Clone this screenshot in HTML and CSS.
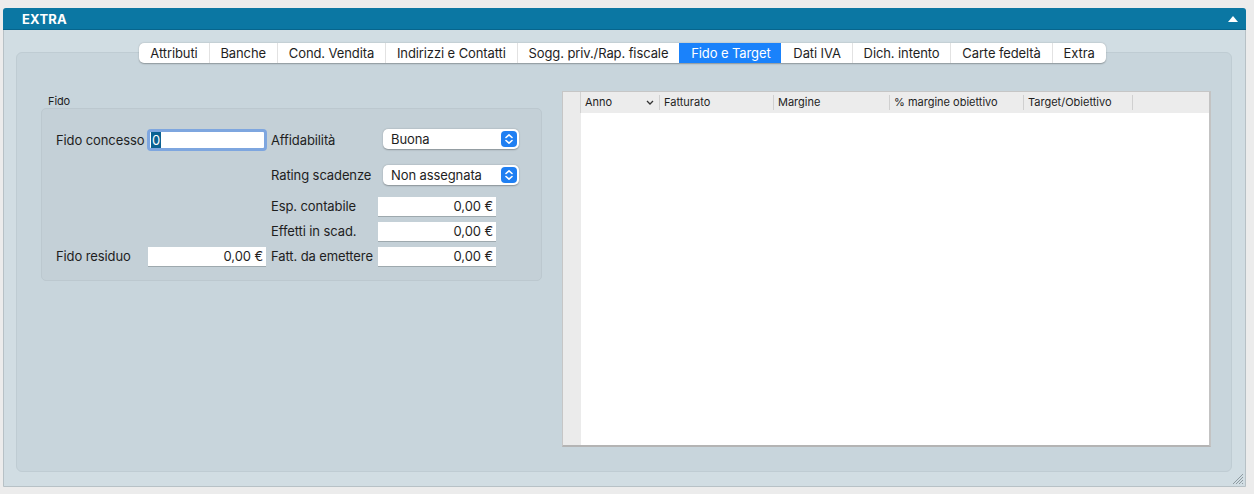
FILE: index.html
```html
<!DOCTYPE html>
<html lang="it">
<head>
  <meta charset="UTF-8" />
  <title>Extra - Fido e Target</title>
  <link rel="stylesheet" href="styles.css">
</head>
<body>
  <section class="panel">
    <header class="panel-head">
      <span class="panel-title">EXTRA</span>
      <svg class="collapse" width="10" height="6" viewBox="0 0 10 6"><path d="M0 6 L5 0 L10 6 Z" fill="#fff"/></svg>
    </header>

    <div class="panel-body">
      <nav class="tabs">
        <a class="tab">Attributi</a>
        <a class="tab">Banche</a>
        <a class="tab">Cond. Vendita</a>
        <a class="tab">Indirizzi e Contatti</a>
        <a class="tab">Sogg. priv./Rap. fiscale</a>
        <a class="tab active">Fido e Target</a>
        <a class="tab">Dati IVA</a>
        <a class="tab">Dich. intento</a>
        <a class="tab">Carte fedeltà</a>
        <a class="tab">Extra</a>
      </nav>

      <div class="tab-box">
        <div class="fido-col">
          <div class="group-label">Fido</div>
          <div class="group">
            <div class="form-grid">
              <label class="lbl r1 c1">Fido concesso</label>
              <div class="input focus r1 c2"><span class="sel">0</span></div>
              <label class="lbl r1 c3">Affidabilità</label>
              <div class="popup r1 c4">Buona <span class="stepper"><svg width="10" height="12" viewBox="0 0 10 12"><path d="M2 4.5 L5 1.8 L8 4.5 M2 7.5 L5 10.2 L8 7.5" stroke="#fff" stroke-width="1.6" fill="none" stroke-linecap="round" stroke-linejoin="round"/></svg></span></div>

              <label class="lbl r2 c3">Rating scadenze</label>
              <div class="popup r2 c4">Non assegnata <span class="stepper"><svg width="10" height="12" viewBox="0 0 10 12"><path d="M2 4.5 L5 1.8 L8 4.5 M2 7.5 L5 10.2 L8 7.5" stroke="#fff" stroke-width="1.6" fill="none" stroke-linecap="round" stroke-linejoin="round"/></svg></span></div>

              <label class="lbl r3 c3">Esp. contabile</label>
              <div class="field r3 c4">0,00 €</div>

              <label class="lbl r4 c3">Effetti in scad.</label>
              <div class="field r4 c4">0,00 €</div>

              <label class="lbl r5 c1">Fido residuo</label>
              <div class="field small r5 c2">0,00 €</div>
              <label class="lbl r5 c3">Fatt. da emettere</label>
              <div class="field r5 c4">0,00 €</div>
            </div>
          </div>
        </div>

        <div class="table">
          <div class="table-head">
            <div class="gutter"></div>
            <div class="th w-anno">Anno <svg class="chev" width="8" height="5" viewBox="0 0 8 5"><path d="M1 1 L4 4 L7 1" stroke="#333" stroke-width="1.3" fill="none"/></svg></div>
            <div class="th w-fatt">Fatturato</div>
            <div class="th w-marg">Margine</div>
            <div class="th w-perc">% margine obiettivo</div>
            <div class="th w-targ">Target/Obiettivo</div>
            <div class="th w-rest"></div>
          </div>
          <div class="table-body">
            <div class="gutter"></div>
            <div class="rows"></div>
          </div>
        </div>
      </div>
    </div>

    <svg class="grip" width="13" height="13" viewBox="0 0 13 13">
      <path d="M12 2 L2 12 M12 5 L5 12 M12 8 L8 12 M12 11 L11 12" stroke="#8f9ba1" stroke-width="1"/>
    </svg>
  </section>
</body>
</html>
```

FILE: styles.css
```css
* {
  box-sizing: border-box;
}

body {
  margin: 0;
  padding: 8px 8px 7px 3px;
  background: #ececec;
  font-family: Inter, "Noto Sans", sans-serif;
  font-size: 13px;
  letter-spacing: -0.1px;
  color: #1e1e1e;
}

.panel {
  position: relative;
  height: 479px;
  border: 1px solid #b7c1c6;
  border-radius: 4px 4px 0 0;
  background: #d1dde3;
  display: flex;
  flex-direction: column;
}

.panel-head {
  height: 22px;
  flex: none;
  background: #0b77a3;
  border-bottom: 1px solid #07658d;
  border-radius: 3px 3px 0 0;
  display: flex;
  align-items: center;
  justify-content: space-between;
  padding: 0 8px 0 19px;
  margin: -1px -1px 0 -1px;
}

.panel-title {
  color: #fff;
  font-weight: 700;
  font-size: 13px;
  letter-spacing: 0.2px;
}

.collapse {
  margin-top: 1px;
}

.panel-body {
  flex: 1;
  display: flex;
  flex-direction: column;
  padding: 13px 13px 14px 12px;
}

/* tabs */
.tabs {
  position: relative;
  z-index: 1;
  align-self: center;
  display: flex;
  height: 20px;
  background: #fff;
  border-radius: 5px;
  box-shadow: 0 0.5px 1.5px rgba(0, 0, 0, 0.3);
  margin-left: -3px;
}

.tab {
  padding: 0 10.9px;
  line-height: 20px;
  font-size: 13px;
  color: #1e1e1e;
  border-left: 1px solid #e2e2e2;
  white-space: nowrap;
}

.tab:first-child {
  border-left: none;
  border-radius: 5px 0 0 5px;
}

.tab:last-child {
  border-radius: 0 5px 5px 0;
}

.tab.active {
  background: #1a82fb;
  color: #fff;
  border-left-color: #1a82fb;
}

.tab.active + .tab {
  border-left-color: #fff;
}

.tab-box {
  flex: 1;
  margin-top: -11px;
  background: #c8d5dc;
  border: 1px solid #bfccd3;
  border-radius: 6px;
  display: flex;
  gap: 20px;
  padding: 38px 20px 24px 24px;
}

/* left group */
.fido-col {
  width: 501px;
  flex: none;
  padding-top: 4px;
}

.group-label {
  font-size: 11px;
  line-height: 13px;
  padding-left: 7px;
}

.group {
  height: 173px;
  background: #c4d0d7;
  border: 1px solid #bcc8cf;
  border-radius: 5px;
  padding: 20px 0 0 14px;
}

.form-grid {
  display: grid;
  grid-template-columns: 91px 124px 107px 141px;
  grid-template-rows: 36px 32px 25px 25px 19px;
}

.r1 { grid-row: 1; }
.r2 { grid-row: 2; }
.r3 { grid-row: 3; }
.r4 { grid-row: 4; }
.r5 { grid-row: 5; }
.c1 { grid-column: 1; }
.c2 { grid-column: 2; }
.c3 { grid-column: 3; }
.c4 { grid-column: 4; }

.lbl {
  align-self: start;
  line-height: 19px;
  white-space: nowrap;
}

.lbl.r1 {
  line-height: 22px;
}

.lbl.r2 {
  line-height: 20px;
}

.input {
  width: 120px;
  height: 22px;
  background: #fff;
  border: 3px solid #7ea6df;
  border-radius: 4px;
  padding-left: 1px;
  line-height: 16px;
  font-size: 13px;
}

.sel {
  display: inline-block;
  background: #0a6192;
  color: #fff;
  padding: 0 1px;
  line-height: 16px;
}

.popup {
  align-self: start;
  width: 136px;
  height: 20px;
  margin-left: 5px;
  background: #fff;
  border-radius: 5px;
  box-shadow: 0 0.5px 1.5px rgba(0, 0, 0, 0.3);
  display: flex;
  align-items: center;
  justify-content: space-between;
  padding: 0 2px 0 8px;
  font-size: 13px;
}

.stepper {
  width: 16px;
  height: 16px;
  background: #1f7ff2;
  border-radius: 4px;
  display: flex;
  align-items: center;
  justify-content: center;
}

.field {
  align-self: start;
  width: 118px;
  height: 19px;
  background: #fff;
  box-shadow: 0 1px 0 #9ea9ae;
  text-align: right;
  padding-right: 3px;
  line-height: 19px;
  font-size: 13px;
}

.field.small {
  margin-left: 1px;
}

/* table */
.table {
  flex: 1;
  display: flex;
  flex-direction: column;
  border: 1px solid #c6c6c6;
  border-bottom: 2px solid #b4b4b4;
  border-right: 2px solid #c3c3c3;
  background: #fff;
}

.table-head {
  display: flex;
  height: 21px;
  background: #ececec;
  font-size: 11px;
  letter-spacing: 0;
}

.gutter {
  width: 18px;
  flex: none;
  background: #ebebeb;
  border-right: 1px solid #d2d2d2;
}

.table-body .gutter {
  border-right: none;
}

.th {
  display: flex;
  align-items: center;
  justify-content: space-between;
  padding: 0 4px;
  position: relative;
  border-right: 1px solid #d0d0d0;
  margin: 3px 0;
  line-height: 15px;
}

.w-anno { width: 79px; padding-right: 5px; }
.w-fatt { width: 114px; }
.w-marg { width: 116px; }
.w-perc { width: 134px; }
.w-targ { width: 109px; }
.w-rest { flex: 1; border-right: none; }

.table-body {
  flex: 1;
  display: flex;
}

.rows {
  flex: 1;
  background: #fff;
}

.grip {
  position: absolute;
  right: 1px;
  bottom: 1px;
}
```
